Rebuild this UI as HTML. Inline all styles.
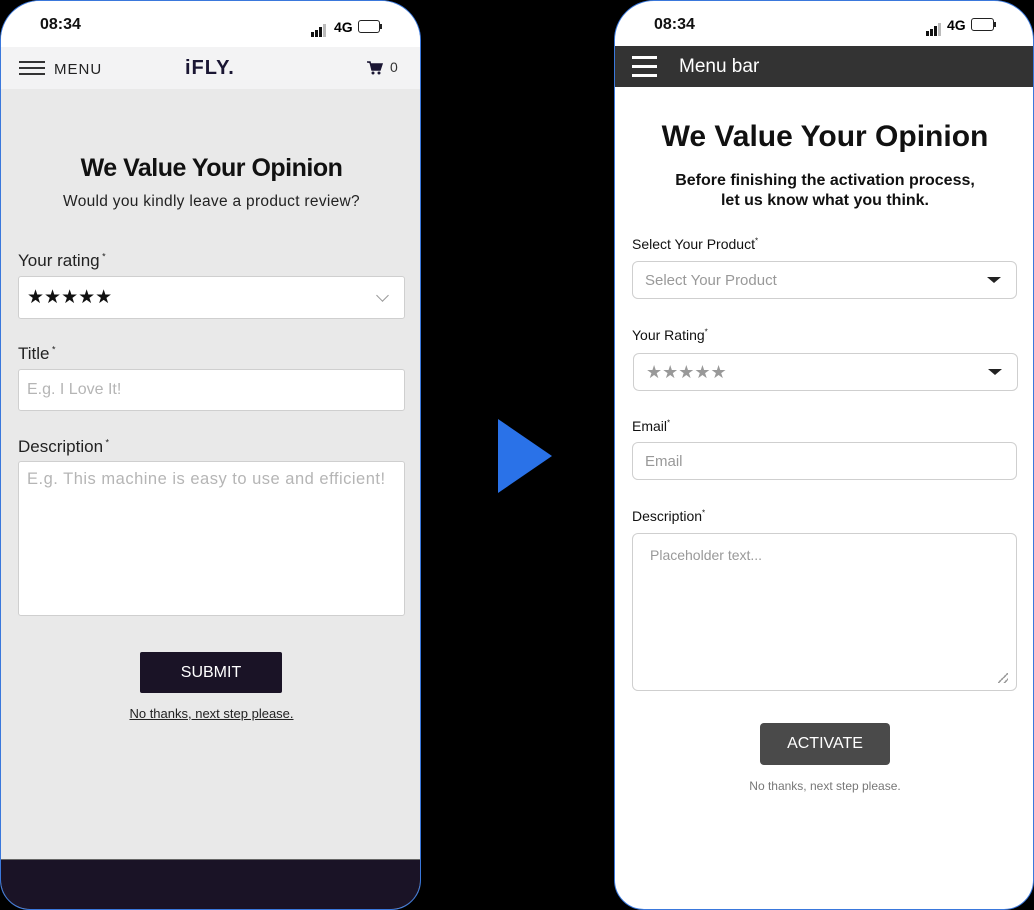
<!DOCTYPE html>
<html><head><style>
*{box-sizing:border-box;margin:0;padding:0}
body{width:1034px;height:910px;background:#000;position:relative;overflow:hidden;font-family:"Liberation Sans",sans-serif}
.ph{position:absolute;top:0;height:910px;border:1.5px solid #3a78dc;border-radius:40px 40px 30px 30px;overflow:hidden}
.a{position:absolute}
.sb{font-weight:bold;font-size:16px;color:#111}
.bars span{display:inline-block;width:3px;background:#111;margin-right:1px;vertical-align:bottom}
.inp{position:absolute;background:#fff;border:1px solid #cfcfcf}
</style></head><body>
<!-- left phone -->
<div class="ph" style="left:0;width:421px;background:#e9e9e9">
 <div class="a" style="left:0;top:0;width:421px;height:46px;background:#fff"></div>
 <div class="a sb" style="left:39px;top:15px">08:34</div>
 <div class="a bars" style="left:310px;top:18px;height:14px"><span style="height:5px"></span><span style="height:7px"></span><span style="height:10px"></span><span style="height:13px;background:#bbb"></span></div>
 <div class="a" style="left:333px;top:18px;font-weight:bold;font-size:14px">4G</div>
 <div class="a" style="left:357px;top:19px;width:22px;height:13px;border:1.5px solid #222;border-radius:3px"></div>
 <div class="a" style="left:379px;top:23px;width:2px;height:5px;background:#222"></div>
 <div class="a" style="left:0;top:46px;width:421px;height:42px;background:#f3f3f4"></div>
 <div class="a" style="left:18px;top:60px;width:26px;height:2px;background:#333;box-shadow:0 6px 0 #333,0 12px 0 #333"></div>
 <div class="a" style="left:53px;top:60px;font-size:15px;letter-spacing:1px;color:#222">MENU</div>
 <div class="a" style="left:184px;top:56px;font-size:20px;font-weight:900;color:#1a1633;letter-spacing:1px">iFLY.</div>
 <svg class="a" style="left:366px;top:60px" width="16" height="14" viewBox="0 0 16 14"><path d="M0 1h3l2 8h8l2-6H4" fill="#1a1633" stroke="#1a1633" stroke-width="1.5"/><circle cx="6" cy="12" r="1.5" fill="#1a1633"/><circle cx="12" cy="12" r="1.5" fill="#1a1633"/></svg>
 <div class="a" style="left:389px;top:58px;font-size:14px;color:#333">0</div>
 <div class="a" style="left:0;width:421px;top:153px;text-align:center;font-weight:bold;font-size:25px;color:#111;letter-spacing:-0.5px">We Value Your Opinion</div>
 <div class="a" style="left:0;width:421px;top:192px;text-align:center;font-size:15.5px;letter-spacing:0.3px;color:#222">Would you kindly leave a product review?</div>
 <div class="a" style="left:17px;top:250px;font-size:17px;color:#222">Your rating<sup style="font-size:9px"> *</sup></div>
 <div class="inp" style="left:17px;top:275px;width:387px;height:43px;border-radius:3px"></div>
 <div class="a" style="left:26px;top:285px;font-size:19px;color:#111">★★★★★</div>
 <div class="a" style="left:377px;top:290px;width:9px;height:9px;border-right:1.5px solid #999;border-bottom:1.5px solid #999;transform:rotate(45deg)"></div>
 <div class="a" style="left:17px;top:343px;font-size:17px;color:#222">Title<sup style="font-size:9px"> *</sup></div>
 <div class="inp" style="left:17px;top:368px;width:387px;height:42px;border-radius:3px"></div>
 <div class="a" style="left:26px;top:380px;font-size:16px;color:#b5b5b5">E.g. I Love It!</div>
 <div class="a" style="left:17px;top:436px;font-size:17px;color:#222">Description<sup style="font-size:9px"> *</sup></div>
 <div class="inp" style="left:17px;top:460px;width:387px;height:155px;border-radius:3px"></div>
 <div class="a" style="left:26px;top:469px;font-size:16.5px;letter-spacing:0.5px;color:#b5b5b5">E.g. This machine is easy to use and efficient!</div>
 <div class="a" style="left:139px;top:651px;width:142px;height:41px;background:#1a1326;border-radius:2px;color:#fff;font-size:16px;text-align:center;line-height:41px">SUBMIT</div>
 <div class="a" style="left:0;width:421px;top:705px;text-align:center;font-size:13px;color:#222;text-decoration:underline">No thanks, next step please.</div>
 <div class="a" style="left:0;top:858px;width:421px;height:52px;background:#1a1326;border-top:1px solid #666"></div>
</div>
<!-- arrow -->
<svg class="a" style="left:496px;top:417px" width="56" height="80"><polygon points="2,2 2,76 56,39" fill="#2a72e8"/></svg>
<!-- right phone -->
<div class="ph" style="left:614px;width:420px;background:#fff">
 <div class="a sb" style="left:39px;top:15px">08:34</div>
 <div class="a bars" style="left:311px;top:17px;height:14px"><span style="height:5px"></span><span style="height:7px"></span><span style="height:10px"></span><span style="height:13px;background:#bbb"></span></div>
 <div class="a" style="left:332px;top:16px;font-weight:bold;font-size:14px">4G</div>
 <div class="a" style="left:356px;top:17px;width:23px;height:13px;border:1.5px solid #222;border-radius:3px"></div>
 <div class="a" style="left:379px;top:21px;width:2px;height:5px;background:#222"></div>
 <div class="a" style="left:0;top:45px;width:420px;height:41px;background:#333"></div>
 <div class="a" style="left:17px;top:55px;width:25px;height:3px;background:#fff;box-shadow:0 9px 0 #fff,0 18px 0 #fff"></div>
 <div class="a" style="left:64px;top:55px;font-size:19px;color:#fff">Menu bar</div>
 <div class="a" style="left:0;width:420px;top:119px;text-align:center;font-weight:bold;font-size:30px;color:#111">We Value Your Opinion</div>
 <div class="a" style="left:0;width:420px;top:170px;text-align:center;font-weight:bold;font-size:16px;line-height:20px;color:#111">Before finishing the activation process,<br>let us know what you think.</div>
 <div class="a" style="left:17px;top:235px;font-size:14px;color:#111">Select Your Product<sup style="font-size:8px">*</sup></div>
 <div class="inp" style="left:17px;top:260px;width:385px;height:38px;border-radius:6px"></div>
 <div class="a" style="left:30px;top:271px;font-size:15px;color:#999">Select Your Product</div>
 <div class="a" style="left:372px;top:276px;border:6px solid transparent;border-top:6px solid #222;border-bottom:0;width:0;height:0;border-left-width:7px;border-right-width:7px"></div>
 <div class="a" style="left:17px;top:326px;font-size:14px;color:#111">Your Rating<sup style="font-size:8px">*</sup></div>
 <div class="inp" style="left:18px;top:352px;width:385px;height:38px;border-radius:6px"></div>
 <div class="a" style="left:31px;top:361px;font-size:18px;color:#999">★★★★★</div>
 <div class="a" style="left:373px;top:368px;border:6px solid transparent;border-top:6px solid #222;border-bottom:0;width:0;height:0;border-left-width:7px;border-right-width:7px"></div>
 <div class="a" style="left:17px;top:417px;font-size:14px;color:#111">Email<sup style="font-size:8px">*</sup></div>
 <div class="inp" style="left:17px;top:441px;width:385px;height:38px;border-radius:6px"></div>
 <div class="a" style="left:30px;top:452px;font-size:15px;color:#999">Email</div>
 <div class="a" style="left:17px;top:507px;font-size:14px;color:#111">Description<sup style="font-size:8px">*</sup></div>
 <div class="inp" style="left:17px;top:532px;width:385px;height:158px;border-radius:6px"></div>
 <div class="a" style="left:35px;top:546px;font-size:14px;color:#999">Placeholder text...</div>
 <div class="a" style="left:383px;top:672px;width:10px;height:10px;background:linear-gradient(135deg,transparent 45%,#999 45%,#999 55%,transparent 55%,transparent 75%,#999 75%,#999 85%,transparent 85%)"></div>
 <div class="a" style="left:145px;top:722px;width:130px;height:42px;background:#4a4a4a;border-radius:4px;color:#fff;font-size:16px;text-align:center;line-height:42px">ACTIVATE</div>
 <div class="a" style="left:0;width:420px;top:778px;text-align:center;font-size:12px;color:#777">No thanks, next step please.</div>
</div>
</body></html>
